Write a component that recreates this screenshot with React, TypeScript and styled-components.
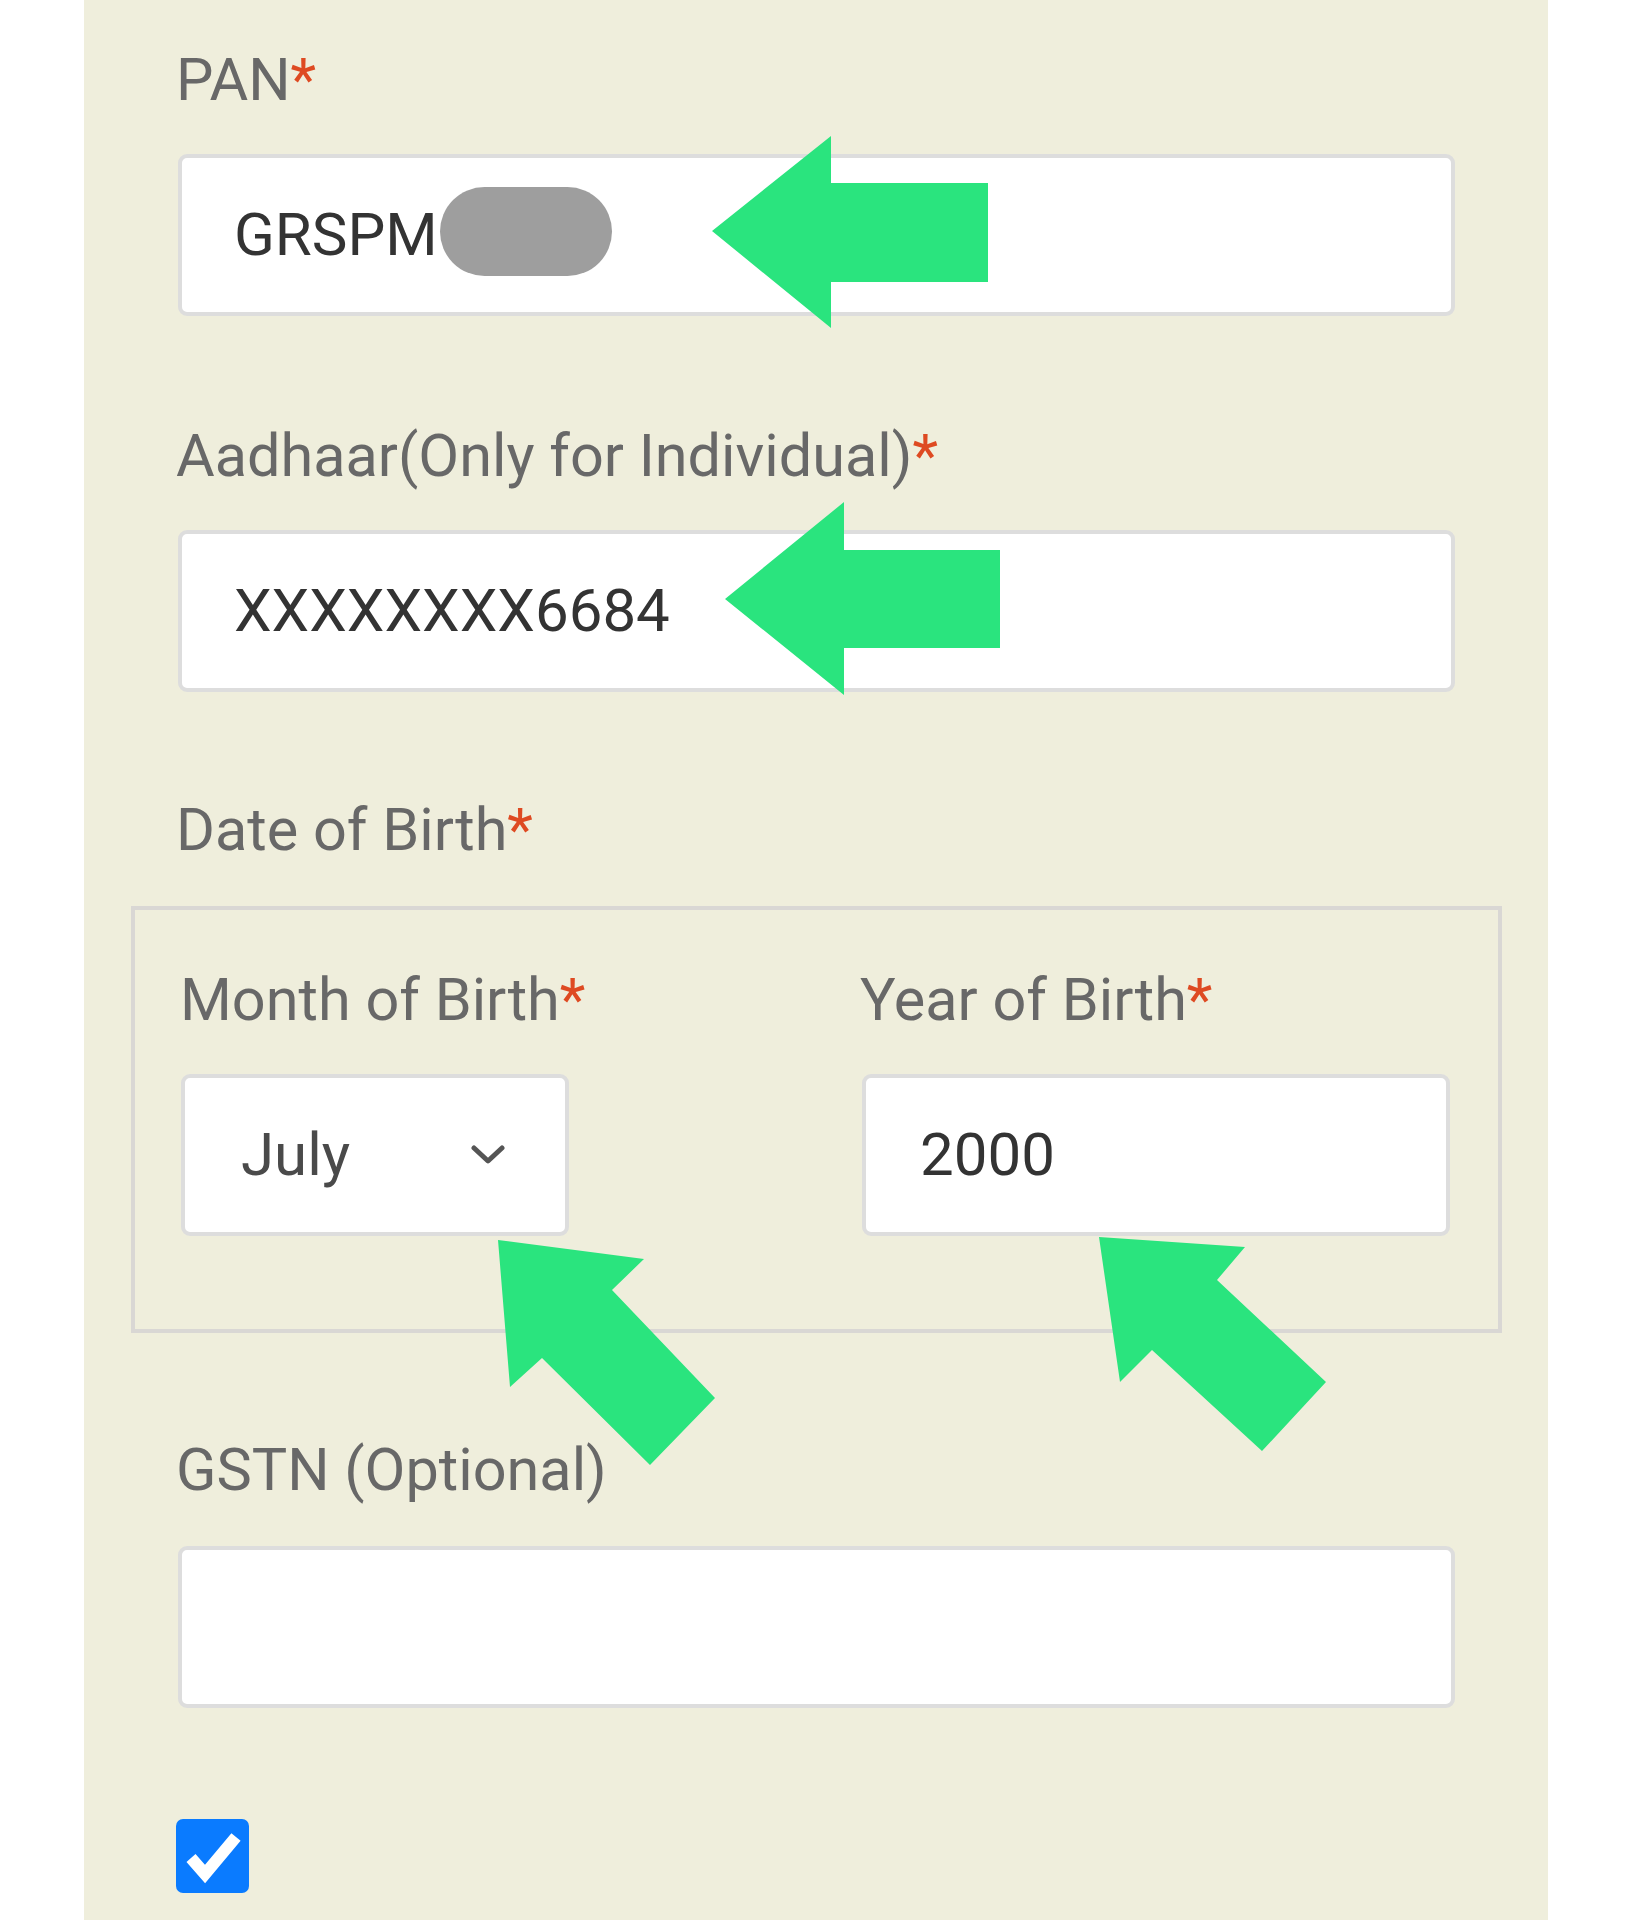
import React from "react";
import styled, { createGlobalStyle } from "styled-components";

const GlobalStyle = createGlobalStyle`
  html, body {
    margin: 0;
    padding: 0;
    background: #ffffff;
  }
  * { box-sizing: border-box; }
`;

const Page = styled.div`
  position: relative;
  width: 1631px;
  min-height: 1920px;
  padding: 0 83px 0 84px;
  background: #ffffff;
  font-family: Roboto, "Liberation Sans", Arial, sans-serif;
  overflow: hidden;
`;

const Panel = styled.div`
  min-height: 1920px;
  background: #efeedc;
  padding: 44px 93px 0 94px;
  display: flex;
  flex-direction: column;
`;

const Group = styled.div<{ $gap?: number }>`
  display: flex;
  flex-direction: column;
  margin-bottom: ${(p) => p.$gap ?? 104}px;
`;

const Label = styled.label<{ $below?: number; $shift?: number }>`
  display: block;
  font-size: 59.4px;
  line-height: 72px;
  color: #686868;
  margin-bottom: ${(p) => p.$below ?? 38}px;
  margin-left: ${(p) => p.$shift ?? -2}px;
  white-space: nowrap;
`;

const Star = styled.span`
  color: #de4a22;
`;

const Field = styled.div<{ $width?: number; $pad?: number }>`
  width: ${(p) => (p.$width ? `${p.$width}px` : "100%")};
  height: 162px;
  background: #ffffff;
  border: 4px solid #dddddd;
  border-radius: 9px;
  display: flex;
  align-items: center;
  padding: 0 52px 0 ${(p) => p.$pad ?? 52}px;
  font-size: 60px;
  line-height: 72px;
  color: #333333;
`;

const Masked = styled.span`
  display: inline-block;
  width: 172px;
  height: 89px;
  border-radius: 45px;
  background: #9e9e9e;
  margin-left: 2px;
  margin-bottom: 8px;
`;

const SelectBox = styled(Field)`
  justify-content: space-between;
  padding: 0 60px 0 56px;
  color: #4a4a4a;
`;

const DateBox = styled.div`
  margin: 0 -47px 101px -47px;
  border: 4px solid #d9d7d4;
  padding: 54px 48px 93px 46px;
  display: grid;
  grid-template-columns: 681px 1fr;
`;

const Col = styled.div`
  display: flex;
  flex-direction: column;
`;

const CheckBox = styled.span`
  display: block;
  width: 73px;
  height: 74px;
  margin-left: -2px;
  margin-top: 7px;
  border-radius: 7px;
  background: #0a7bff;
`;

const Overlay = styled.svg`
  position: absolute;
  left: 0;
  top: 0;
  width: 1631px;
  height: 1920px;
  pointer-events: none;
`;

const ARROWS = [
  "712,231 831,136 831,183 988,183 988,282 831,282 831,328",
  "725,599 844,502 844,550 1000,550 1000,648 844,648 844,695",
  "498,1240 644,1259 612,1290 715,1398 650,1465 542,1358 510,1387",
  "1099,1237 1245,1247 1217,1280 1326,1382 1262,1451 1152,1350 1120,1382",
];

export default function App() {
  return (
    <Page>
      <GlobalStyle />
      <Panel>
        <Group>
          <Label>
            PAN<Star>*</Star>
          </Label>
          <Field>
            GRSPM
            <Masked />
          </Field>
        </Group>

        <Group $gap={102}>
          <Label>
            Aadhaar(Only for Individual)<Star>*</Star>
          </Label>
          <Field>XXXXXXXX6684</Field>
        </Group>

        <Label $below={40}>
          Date of Birth<Star>*</Star>
        </Label>
        <DateBox>
          <Col>
            <Label $shift={-1}>
              Month of Birth<Star>*</Star>
            </Label>
            <SelectBox $width={388}>
              <span>July</span>
              <svg width="34" height="20" viewBox="0 0 34 20">
                <polyline
                  points="3,3 17,16 31,3"
                  fill="none"
                  stroke="#555555"
                  strokeWidth="5"
                  strokeLinecap="round"
                  strokeLinejoin="round"
                />
              </svg>
            </SelectBox>
          </Col>
          <Col>
            <Label>
              Year of Birth<Star>*</Star>
            </Label>
            <Field $pad={54}>2000</Field>
          </Col>
        </DateBox>

        <Group $gap={104}>
          <Label $below={40}>GSTN (Optional)</Label>
          <Field />
        </Group>

        <CheckBox>
          <svg width="73" height="74" viewBox="0 0 73 74">
            <polyline
              points="15,39 29,55 60,18"
              fill="none"
              stroke="#ffffff"
              strokeWidth="12"
            />
          </svg>
        </CheckBox>
      </Panel>
      <Overlay viewBox="0 0 1631 1920">
        {ARROWS.map((pts, i) => (
          <polygon key={i} points={pts} fill="#2ae47e" />
        ))}
      </Overlay>
    </Page>
  );
}
